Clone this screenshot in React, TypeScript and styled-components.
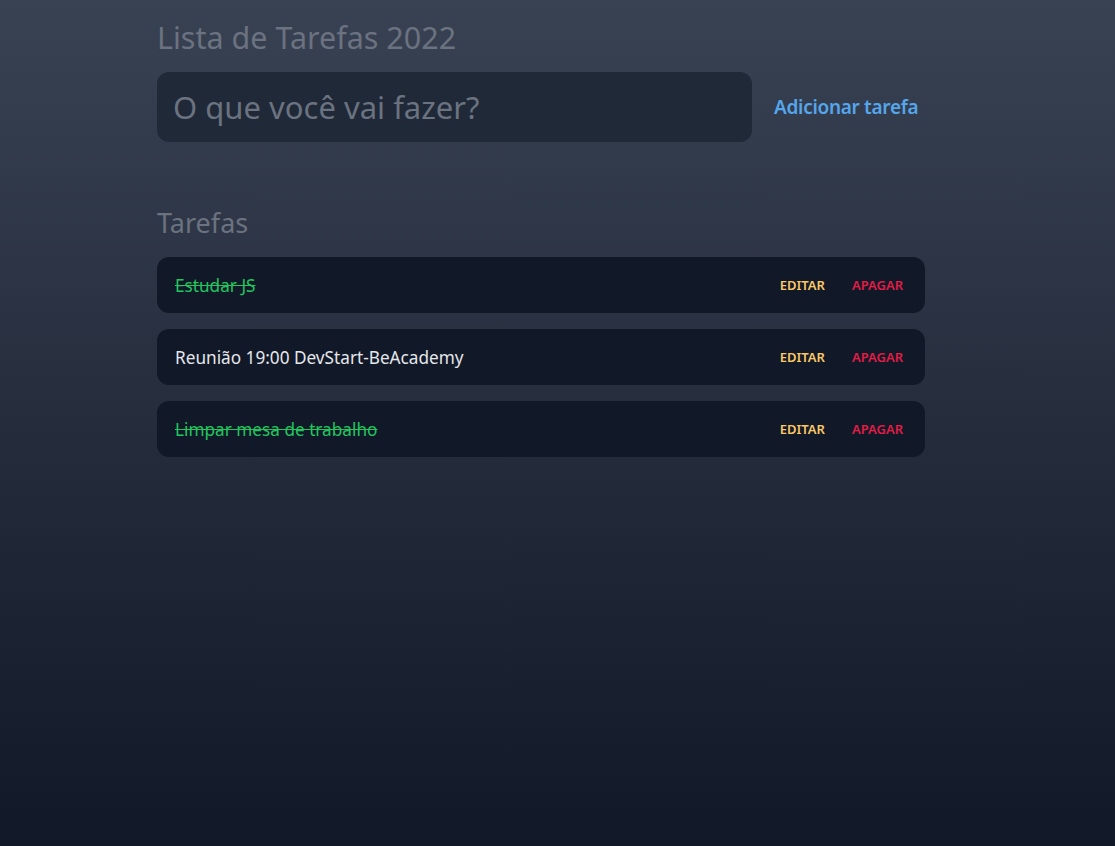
import styled, { createGlobalStyle } from 'styled-components';

const GlobalStyle = createGlobalStyle`
  html, body {
    margin: 0;
    padding: 0;
  }
  body {
    min-height: 100vh;
    background: linear-gradient(180deg, #394253 0%, #111827 100%);
    font-family: 'Noto Sans', 'Open Sans', sans-serif;
  }
`;

const Page = styled.main`
  width: 801px;
  margin: 0 auto;
  padding: 15px 33px 0 0;
  box-sizing: border-box;
`;

const Title = styled.h1`
  margin: 0 0 13px;
  font-size: 30.5px;
  font-weight: 400;
  line-height: 44px;
  color: #6b7280;
`;

const Form = styled.form`
  display: flex;
  align-items: center;
  gap: 22px;
`;

const Input = styled.input`
  width: 595px;
  height: 70px;
  box-sizing: border-box;
  padding: 0 16px;
  border: none;
  border-radius: 12px;
  background: #1f2937;
  color: #e5e7eb;
  font-family: inherit;
  font-size: 31px;
  outline: none;
  &::placeholder {
    color: #6b7280;
  }
`;

const AddButton = styled.button`
  border: none;
  background: none;
  padding: 0;
  color: #55a6ea;
  font-family: inherit;
  font-size: 19px;
  font-weight: 600;
  letter-spacing: -0.3px;
  cursor: pointer;
`;

const SectionTitle = styled.h2`
  margin: 61px 0 14px;
  font-size: 27px;
  font-weight: 400;
  line-height: 40px;
  color: #6b7280;
`;

const List = styled.ul`
  list-style: none;
  margin: 0;
  padding: 0;
  display: flex;
  flex-direction: column;
  gap: 16px;
`;

const Row = styled.li`
  display: flex;
  align-items: center;
  height: 56px;
  padding: 0 22px 0 18px;
  border-radius: 12px;
  background: #111827;
`;

const TaskText = styled.span<{ $done: boolean }>`
  flex: 1;
  font-size: 17.2px;
  color: ${(p) => (p.$done ? '#22c55e' : '#e5e7eb')};
  text-decoration: ${(p) => (p.$done ? 'line-through' : 'none')};
`;

const Action = styled.button<{ $tone: 'edit' | 'delete' }>`
  border: none;
  background: none;
  padding: 0;
  margin-left: 27px;
  font-family: inherit;
  font-size: 13px;
  font-weight: 600;
  text-transform: uppercase;
  color: ${(p) => (p.$tone === 'edit' ? '#f8c965' : '#e11d48')};
  cursor: pointer;
`;

const tasks = [
  { id: 1, text: 'Estudar JS', done: true },
  { id: 2, text: 'Reunião 19:00 DevStart-BeAcademy', done: false },
  { id: 3, text: 'Limpar mesa de trabalho', done: true },
];

export default function App() {
  return (
    <>
      <GlobalStyle />
      <Page>
        <Title>Lista de Tarefas 2022</Title>
        <Form onSubmit={(e) => e.preventDefault()}>
          <Input placeholder="O que você vai fazer?" />
          <AddButton type="submit">Adicionar tarefa</AddButton>
        </Form>
        <SectionTitle>Tarefas</SectionTitle>
        <List>
          {tasks.map((t) => (
            <Row key={t.id}>
              <TaskText $done={t.done}>{t.text}</TaskText>
              <Action $tone="edit">Editar</Action>
              <Action $tone="delete">Apagar</Action>
            </Row>
          ))}
        </List>
      </Page>
    </>
  );
}
